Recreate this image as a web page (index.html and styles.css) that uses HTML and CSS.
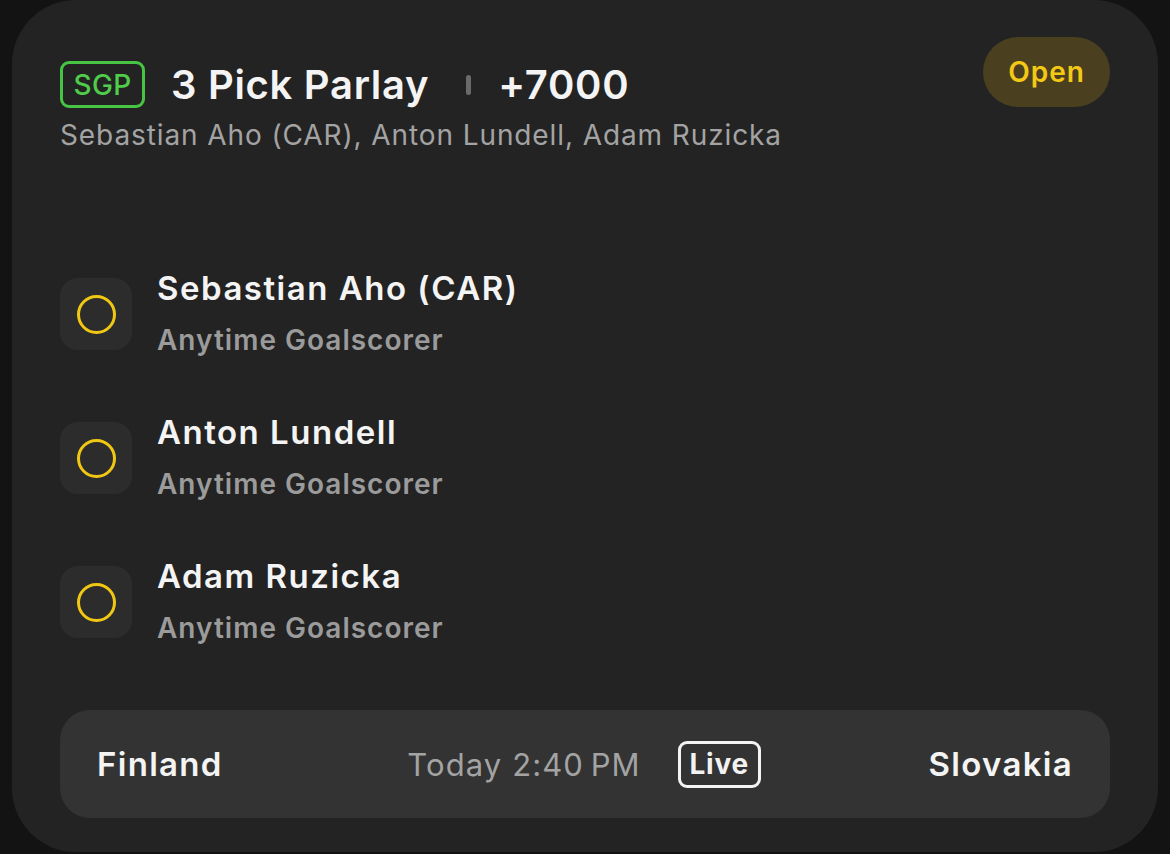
FILE: index.html
```html
<!DOCTYPE html>
<html>
<head>
<meta charset="utf-8">
<link rel="stylesheet" href="styles.css">
</head>
<body>
<div class="card">
  <div class="header">
    <div class="header-main">
      <div class="title-row">
        <span class="sgp">SGP</span>
        <span class="title">3 Pick Parlay</span>
        <span class="sep"></span>
        <span class="odds">+7000</span>
      </div>
      <div class="subtitle">Sebastian Aho (CAR), Anton Lundell, Adam Ruzicka</div>
    </div>
    <span class="status">Open</span>
  </div>

  <div class="legs">
    <div class="leg">
      <div class="leg-icon"><span class="ring"></span></div>
      <div class="leg-text">
        <div class="leg-name">Sebastian Aho (CAR)</div>
        <div class="leg-market">Anytime Goalscorer</div>
      </div>
    </div>
    <div class="leg">
      <div class="leg-icon"><span class="ring"></span></div>
      <div class="leg-text">
        <div class="leg-name">Anton Lundell</div>
        <div class="leg-market">Anytime Goalscorer</div>
      </div>
    </div>
    <div class="leg">
      <div class="leg-icon"><span class="ring"></span></div>
      <div class="leg-text">
        <div class="leg-name">Adam Ruzicka</div>
        <div class="leg-market">Anytime Goalscorer</div>
      </div>
    </div>
  </div>

  <div class="game">
    <span class="team team-home">Finland</span>
    <div class="game-mid">
      <span class="time">Today 2:40&#8201;PM</span>
      <span class="live">Live</span>
    </div>
    <span class="team team-away">Slovakia</span>
  </div>
</div>
</body>
</html>
```
FILE: styles.css
```css
html, body {
  margin: 0;
  padding: 0;
  background: #131313;
}
body {
  width: 1170px;
  height: 854px;
  overflow: hidden;
  font-family: Inter, "Noto Sans", sans-serif;
  color: #f2f2f2;
}
.card {
  box-sizing: border-box;
  margin: 0 12px;
  width: 1146px;
  height: 852px;
  background: #232323;
  border-radius: 64px;
  padding: 37px 48px 0 48px;
  display: flex;
  flex-direction: column;
}
.header {
  display: flex;
  justify-content: space-between;
  align-items: flex-start;
}
.header-main {
  display: flex;
  flex-direction: column;
  padding-top: 24px;
}
.title-row {
  display: flex;
  align-items: center;
  height: 47px;
}
.sgp {
  box-sizing: border-box;
  height: 47px;
  width: 85px;
  border: 3px solid #48c444;
  border-radius: 9px;
  color: #4fcc4a;
  font-size: 28px;
  font-weight: 500;
  letter-spacing: 0.3px;
  display: flex;
  align-items: center;
  justify-content: center;
  margin-right: 26px;
}
.title, .odds {
  font-size: 40px;
  font-weight: 600;
  color: #f4f4f4;
  letter-spacing: 0.7px;
}
.sep {
  width: 5px;
  height: 20px;
  border-radius: 3px;
  background: #6a6a6a;
  margin: 0 27px 0 37px;
}
.subtitle {
  margin-top: 10px;
  font-size: 28px;
  color: #a3a3a3;
  font-weight: 400;
  letter-spacing: 0.9px;
}
.status {
  height: 70px;
  width: 127px;
  border-radius: 35px;
  background: #4a4020;
  color: #f3c916;
  font-size: 28px;
  font-weight: 600;
  letter-spacing: 1px;
  display: flex;
  align-items: center;
  justify-content: center;
}
.legs {
  display: flex;
  flex-direction: column;
  gap: 72px;
  margin-top: 126px;
}
.leg {
  display: flex;
  align-items: flex-start;
  height: 72px;
}
.leg-icon {
  width: 72px;
  height: 72px;
  border-radius: 18px;
  background: #2c2c2c;
  display: flex;
  align-items: center;
  justify-content: center;
  flex-shrink: 0;
}
.ring {
  box-sizing: border-box;
  width: 39px;
  height: 39px;
  border-radius: 50%;
  border: 3px solid #f0c814;
}
.leg-text {
  margin-left: 25px;
  display: flex;
  flex-direction: column;
  margin-top: -10px;
}
.leg-name {
  font-size: 33px;
  font-weight: 600;
  color: #f4f4f4;
  line-height: 40px;
  letter-spacing: 1.5px;
}
.leg-market {
  margin-top: 16px;
  font-size: 28px;
  font-weight: 600;
  color: #9b9b9b;
  line-height: 32px;
  letter-spacing: 1px;
}
.game {
  margin-top: 72px;
  height: 108px;
  border-radius: 30px;
  background: #333333;
  display: grid;
  grid-template-columns: 1fr auto 1fr;
  align-items: center;
  padding: 0 39px 0 37px;
}
.team {
  font-size: 33px;
  font-weight: 600;
  color: #f4f4f4;
  letter-spacing: 1.3px;
}
.team-away {
  justify-self: end;
  margin-right: -2px;
}
.game-mid {
  display: flex;
  align-items: center;
}
.time {
  font-size: 31px;
  color: #a3a3a3;
  font-weight: 400;
  letter-spacing: 1.1px;
}
.live {
  box-sizing: border-box;
  margin-left: 37px;
  height: 47px;
  width: 83px;
  border: 3px solid #f4f4f4;
  border-radius: 9px;
  font-size: 28px;
  font-weight: 700;
  letter-spacing: 0.8px;
  display: flex;
  align-items: center;
  justify-content: center;
}
```
